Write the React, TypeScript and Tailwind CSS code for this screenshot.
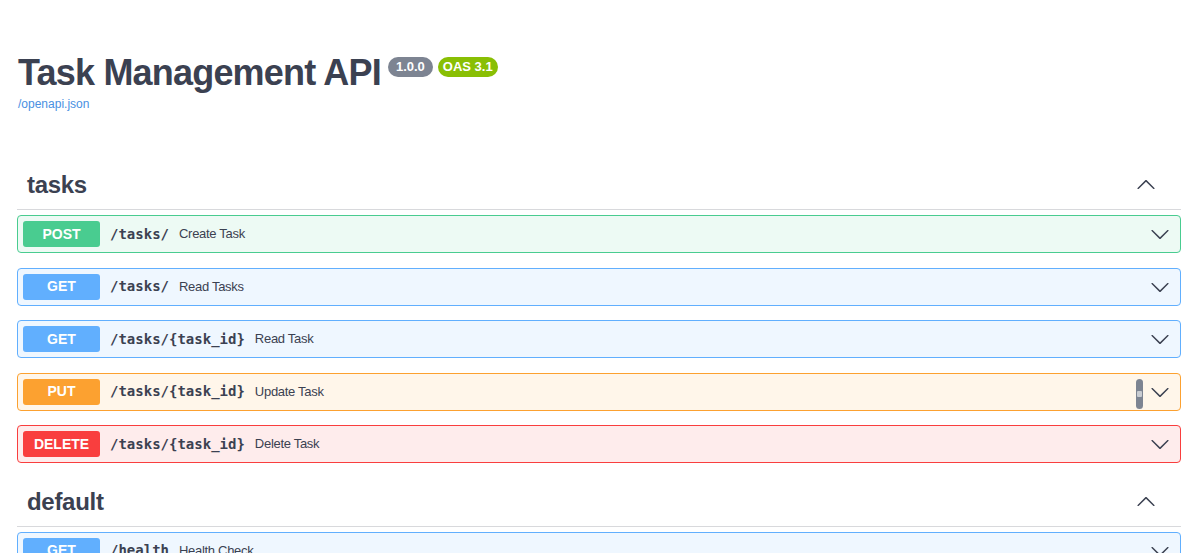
import React from "react";

type Method = "POST" | "GET" | "PUT" | "DELETE";

const METHOD_STYLES: Record<Method, { row: string; badge: string }> = {
  POST: { row: "bg-[#edfaf4] border-[#49cc90]", badge: "bg-[#49cc90]" },
  GET: { row: "bg-[#eff7ff] border-[#61affe]", badge: "bg-[#61affe]" },
  PUT: { row: "bg-[#fff6ea] border-[#fca130]", badge: "bg-[#fca130]" },
  DELETE: { row: "bg-[#feecec] border-[#f93e3e]", badge: "bg-[#f93e3e]" },
};

type Operation = {
  method: Method;
  path: string;
  summary: string;
  copyHint?: boolean;
};

const SECTIONS: { tag: string; ops: Operation[] }[] = [
  {
    tag: "tasks",
    ops: [
      { method: "POST", path: "/tasks/", summary: "Create Task" },
      { method: "GET", path: "/tasks/", summary: "Read Tasks" },
      { method: "GET", path: "/tasks/{task_id}", summary: "Read Task" },
      { method: "PUT", path: "/tasks/{task_id}", summary: "Update Task", copyHint: true },
      { method: "DELETE", path: "/tasks/{task_id}", summary: "Delete Task" },
    ],
  },
  {
    tag: "default",
    ops: [{ method: "GET", path: "/health", summary: "Health Check" }],
  },
];

function Arrow({ up = false }: { up?: boolean }) {
  return (
    <svg
      width="20"
      height="20"
      viewBox="0 0 20 20"
      className={up ? "rotate-180 shrink-0" : "shrink-0"}
      fill="#3b4151"
    >
      <path d="M17.418 6.109c.272-.268.709-.268.979 0s.271.701 0 .969l-7.908 7.83c-.27.268-.707.268-.979 0l-7.908-7.83c-.27-.268-.27-.701 0-.969.271-.268.709-.268.979 0L10 13.25l7.418-7.141z" />
    </svg>
  );
}

function OpRow({ op }: { op: Operation }) {
  const s = METHOD_STYLES[op.method];
  return (
    <div
      className={`h-[38px] mb-[14.5px] border rounded-[4px] flex items-center pl-[5px] pr-[10px] ${s.row}`}
    >
      <span
        className={`w-[77px] h-[26px] rounded-[3px] flex items-center justify-center text-white text-[14px] font-bold ${s.badge}`}
      >
        {op.method}
      </span>
      <span className="ml-[10px] font-['DejaVu_Sans_Mono',monospace] font-bold text-[14px] text-[#3b4151]">
        {op.path}
      </span>
      <span className="ml-[10px] text-[13px] tracking-[-0.3px] text-[#3b4151]">{op.summary}</span>
      <div className="ml-auto flex items-center gap-[7px]">
        {op.copyHint && (
          <span className="w-[7px] h-[30px] mt-[5px] rounded-full bg-[#7d8492] flex items-center justify-center">
            <span className="w-[5px] h-[6px] bg-[#c9ccd2] rounded-[1px]" />
          </span>
        )}
        <Arrow />
      </div>
    </div>
  );
}

export default function App() {
  return (
    <div className="min-h-screen bg-white text-[#3b4151] font-['Liberation_Sans',Arial,sans-serif]">
      <div className="pl-[17px] pr-[19px]">
        {/* API info */}
        <div className="pt-[55px] pb-[50px] pl-px">
          <div className="flex items-start">
            <h2 className="text-[36px] leading-none font-bold tracking-[-0.8px] text-[#3b4151]">
              Task Management API
            </h2>
            <span className="ml-[7px] mt-[2px] h-[20px] px-[8px] rounded-full bg-[#7d8492] text-white text-[13px] font-bold flex items-center">
              1.0.0
            </span>
            <span className="ml-[5px] mt-[2px] h-[20px] px-[5px] rounded-full bg-[#89bf04] text-white text-[13px] font-bold flex items-center">
              OAS 3.1
            </span>
          </div>
          <a className="block mt-[6px] text-[12px] leading-[14px] text-[#4990e2]">/openapi.json</a>
        </div>

        {SECTIONS.map((section) => (
          <div key={section.tag}>
            <div className="flex items-center justify-between py-[10px] pl-[10px] pr-[25px] mb-[5px] border-b border-[#3b4151]/20">
              <h3 className="text-[24px] leading-[28px] font-bold tracking-[-0.3px]">{section.tag}</h3>
              <Arrow up />
            </div>
            {section.ops.map((op, i) => (
              <OpRow key={section.tag + i} op={op} />
            ))}
          </div>
        ))}
      </div>
    </div>
  );
}
